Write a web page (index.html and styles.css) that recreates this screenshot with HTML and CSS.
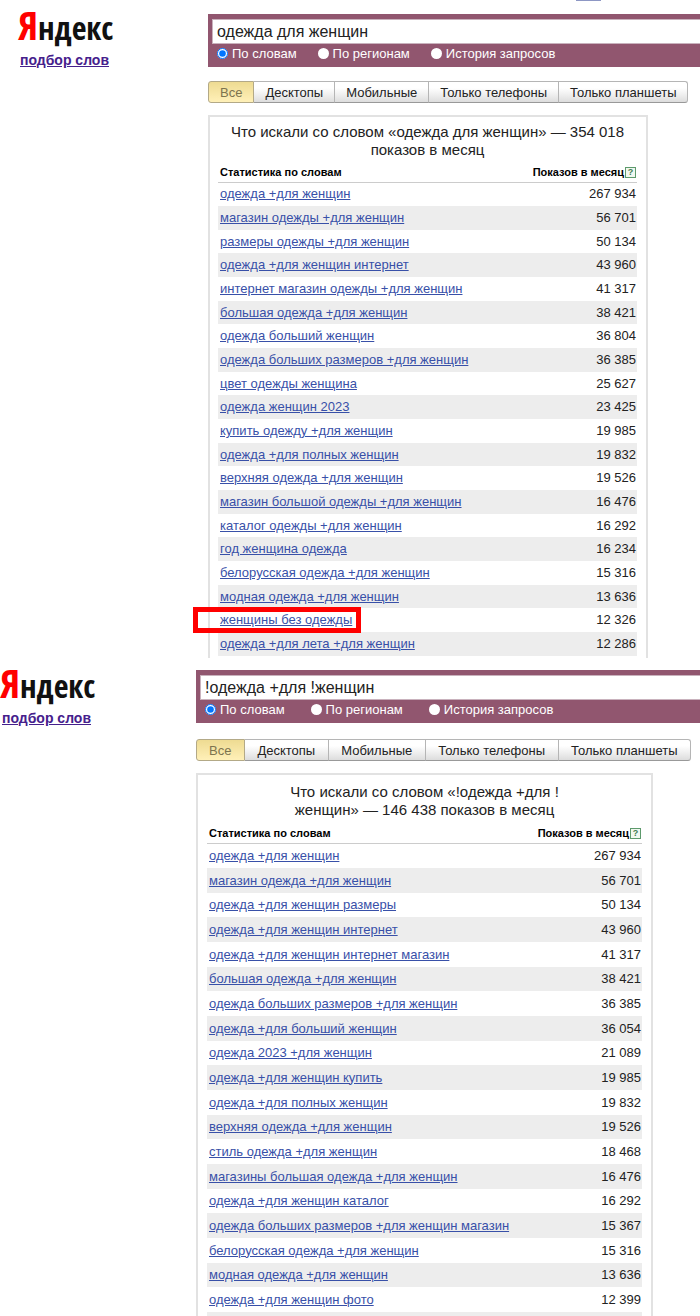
FILE: index.html
```html
<!DOCTYPE html>
<html lang="ru">
<head>
<meta charset="utf-8">
<meta name="viewport" content="width=device-width, initial-scale=1">
<title>Яндекс — подбор слов</title>
<link rel="stylesheet" href="styles.css">
</head>
<body>
<section class="sheet sheet-first">
  <span class="top-rule"></span>
  <header class="brand">
    <div class="logo"><span class="logo-ya">Я</span>ндекс</div>
    <a class="service" href="#">подбор слов</a>
  </header>
  <main class="content">
    <form class="search">
      <input class="query" type="text" aria-label="Запрос" value="одежда для женщин">
      <div class="modes">
        <label class="mode"><input type="radio" name="mode1" checked>По словам</label>
        <label class="mode"><input type="radio" name="mode1">По регионам</label>
        <label class="mode"><input type="radio" name="mode1">История запросов</label>
      </div>
    </form>
    <nav class="tabs">
      <button class="tab active" type="button">Все</button>
      <button class="tab" type="button">Десктопы</button>
      <button class="tab" type="button">Мобильные</button>
      <button class="tab" type="button">Только телефоны</button>
      <button class="tab" type="button">Только планшеты</button>
    </nav>
    <section class="panel">
      <h2 class="title">Что искали со словом «одежда для женщин» — 354 018 показов в месяц</h2>
      <table class="stats">
        <thead><tr><th>Статистика по словам</th><th class="num">Показов в месяц<button class="help" type="button">?</button></th></tr></thead>
        <tbody>
          <tr><td><a href="#">одежда +для женщин</a></td><td class="num">267 934</td></tr>
          <tr><td><a href="#">магазин одежды +для женщин</a></td><td class="num">56 701</td></tr>
          <tr><td><a href="#">размеры одежды +для женщин</a></td><td class="num">50 134</td></tr>
          <tr><td><a href="#">одежда +для женщин интернет</a></td><td class="num">43 960</td></tr>
          <tr><td><a href="#">интернет магазин одежды +для женщин</a></td><td class="num">41 317</td></tr>
          <tr><td><a href="#">большая одежда +для женщин</a></td><td class="num">38 421</td></tr>
          <tr><td><a href="#">одежда больший женщин</a></td><td class="num">36 804</td></tr>
          <tr><td><a href="#">одежда больших размеров +для женщин</a></td><td class="num">36 385</td></tr>
          <tr><td><a href="#">цвет одежды женщина</a></td><td class="num">25 627</td></tr>
          <tr><td><a href="#">одежда женщин 2023</a></td><td class="num">23 425</td></tr>
          <tr><td><a href="#">купить одежду +для женщин</a></td><td class="num">19 985</td></tr>
          <tr><td><a href="#">одежда +для полных женщин</a></td><td class="num">19 832</td></tr>
          <tr><td><a href="#">верхняя одежда +для женщин</a></td><td class="num">19 526</td></tr>
          <tr><td><a href="#">магазин большой одежды +для женщин</a></td><td class="num">16 476</td></tr>
          <tr><td><a href="#">каталог одежды +для женщин</a></td><td class="num">16 292</td></tr>
          <tr><td><a href="#">год женщина одежда</a></td><td class="num">16 234</td></tr>
          <tr><td><a href="#">белорусская одежда +для женщин</a></td><td class="num">15 316</td></tr>
          <tr><td><a href="#">модная одежда +для женщин</a></td><td class="num">13 636</td></tr>
          <tr><td><span class="marked"><a href="#">женщины без одежды</a></span></td><td class="num">12 326</td></tr>
          <tr><td><a href="#">одежда +для лета +для женщин</a></td><td class="num">12 286</td></tr>
        </tbody>
      </table>
    </section>
  </main>
</section>
<section class="sheet sheet-second">
  <header class="brand">
    <div class="logo"><span class="logo-ya">Я</span>ндекс</div>
    <a class="service" href="#">подбор слов</a>
  </header>
  <main class="content">
    <form class="search">
      <input class="query" type="text" aria-label="Запрос" value="!одежда +для !женщин">
      <div class="modes">
        <label class="mode"><input type="radio" name="mode2" checked>По словам</label>
        <label class="mode"><input type="radio" name="mode2">По регионам</label>
        <label class="mode"><input type="radio" name="mode2">История запросов</label>
      </div>
    </form>
    <nav class="tabs">
      <button class="tab active" type="button">Все</button>
      <button class="tab" type="button">Десктопы</button>
      <button class="tab" type="button">Мобильные</button>
      <button class="tab" type="button">Только телефоны</button>
      <button class="tab" type="button">Только планшеты</button>
    </nav>
    <section class="panel">
      <h2 class="title">Что искали со словом «!одежда +для !<br>женщин» — 146 438 показов в месяц</h2>
      <table class="stats">
        <thead><tr><th>Статистика по словам</th><th class="num">Показов в месяц<button class="help" type="button">?</button></th></tr></thead>
        <tbody>
          <tr><td><a href="#">одежда +для женщин</a></td><td class="num">267 934</td></tr>
          <tr><td><a href="#">магазин одежда +для женщин</a></td><td class="num">56 701</td></tr>
          <tr><td><a href="#">одежда +для женщин размеры</a></td><td class="num">50 134</td></tr>
          <tr><td><a href="#">одежда +для женщин интернет</a></td><td class="num">43 960</td></tr>
          <tr><td><a href="#">одежда +для женщин интернет магазин</a></td><td class="num">41 317</td></tr>
          <tr><td><a href="#">большая одежда +для женщин</a></td><td class="num">38 421</td></tr>
          <tr><td><a href="#">одежда больших размеров +для женщин</a></td><td class="num">36 385</td></tr>
          <tr><td><a href="#">одежда +для больший женщин</a></td><td class="num">36 054</td></tr>
          <tr><td><a href="#">одежда 2023 +для женщин</a></td><td class="num">21 089</td></tr>
          <tr><td><a href="#">одежда +для женщин купить</a></td><td class="num">19 985</td></tr>
          <tr><td><a href="#">одежда +для полных женщин</a></td><td class="num">19 832</td></tr>
          <tr><td><a href="#">верхняя одежда +для женщин</a></td><td class="num">19 526</td></tr>
          <tr><td><a href="#">стиль одежда +для женщин</a></td><td class="num">18 468</td></tr>
          <tr><td><a href="#">магазины большая одежда +для женщин</a></td><td class="num">16 476</td></tr>
          <tr><td><a href="#">одежда +для женщин каталог</a></td><td class="num">16 292</td></tr>
          <tr><td><a href="#">одежда больших размеров +для женщин магазин</a></td><td class="num">15 367</td></tr>
          <tr><td><a href="#">белорусская одежда +для женщин</a></td><td class="num">15 316</td></tr>
          <tr><td><a href="#">модная одежда +для женщин</a></td><td class="num">13 636</td></tr>
          <tr><td><a href="#">одежда +для женщин фото</a></td><td class="num">12 399</td></tr>
          <tr class="cut"><td></td><td></td></tr>
        </tbody>
      </table>
    </section>
  </main>
</section>
</body>
</html>
```
FILE: styles.css
```css
* { box-sizing: border-box; }

body {
  margin: 0;
  background: #fff;
  color: #222;
  font-family: "Liberation Sans", Arial, sans-serif;
  font-size: 13px;
}

.sheet {
  display: grid;
  position: relative;
}
.sheet-first {
  --row: 24px;
  --gutter: 52px;
  --mode-gap: 21px;
  --bar-top: 14px;
  --tab-padding: 11px;
  --head: 19px;
  --title-top: 6px;
  grid-template-columns: 208px 1fr;
}
.sheet-second {
  --row: 25px;
  --gutter: 47px;
  --mode-gap: 26px;
  --bar-top: 12px;
  --tab-padding: 13px;
  --head: 20px;
  --title-top: 8px;
  grid-template-columns: 196px 1fr;
}

.top-rule {
  position: absolute;
  top: 0;
  left: 576px;
  width: 25px;
  height: 1px;
  background: #8d97c4;
}

.brand { padding-left: 18px; }
.sheet-second .brand { padding-left: 0; }
.logo {
  height: 52px;
  font-family: "Liberation Sans Narrow", "Open Sans Condensed", "DejaVu Sans Condensed", sans-serif;
  font-size: 32px;
  font-weight: 300;
  line-height: 50px;
  color: #111;
  white-space: nowrap;
}
.logo-ya { color: #f00; font-size: 40px; }
.service {
  display: inline-block;
  margin-left: 2px;
  font-size: 14px;
  line-height: 16px;
  font-weight: bold;
  color: #45208c;
}

.content { padding-top: var(--bar-top); }
.search { padding: 5px 0 0 4px; background: #91566f; }
.query {
  display: block;
  width: 100%;
  height: 25px;
  padding: 0 4px;
  border: 1px solid #c9b2bd;
  border-right: 0;
  border-radius: 0;
  background: #fff;
  color: #222;
  font: 16px "Liberation Sans", Arial, sans-serif;
}
.modes { display: flex; gap: var(--mode-gap); height: 23px; padding: 0 0 4px 5px; }
.mode { display: flex; align-items: center; gap: 4px; color: #fff; white-space: nowrap; }
.mode input { width: 11px; height: 11px; margin: 0; }
.mode input:not(:checked) {
  appearance: none;
  border-radius: 50%;
  background: #fff;
}

.tabs { display: flex; margin-top: 14px; }
.sheet-second .tabs { margin-top: 16px; }
.tab {
  height: 22px;
  padding: 0 var(--tab-padding) 0 12px;
  border: 1px solid #b5b5b5;
  border-left-width: 0;
  border-bottom-color: #999;
  background: linear-gradient(#fff 30%, #ddd);
  color: #222;
  font: 13px "Liberation Sans", Arial, sans-serif;
  white-space: nowrap;
}
.sheet-first .tab { padding-left: 11px; }
.tab:last-child { border-radius: 0 3px 3px 0; }
.tab.active {
  border-left-width: 1px;
  border-radius: 3px 0 0 3px;
  border-color: #b3a987;
  background: linear-gradient(#eedb92, #fff0b8);
  color: #7d744f;
}

.panel {
  margin: 12px var(--gutter) 0 0;
  padding: var(--title-top) 9px 2px 8px;
  border: 2px solid #e2e2e2;
  border-bottom: 0;
}
.sheet-second .panel { padding-bottom: 0; padding-left: 9px; }
.title { margin: 0; font-size: 15px; line-height: 18px; font-weight: normal; text-align: center; }

.stats { width: 100%; margin-top: 4px; border-collapse: collapse; }
.stats th {
  height: var(--head);
  padding: 0 2px;
  border-bottom: 1px solid #ccc;
  color: #000;
  font-size: 11px;
  text-align: left;
}
.stats td { height: var(--row); padding: 0 2px; line-height: 16px; }
.stats tr:nth-child(3n) td { height: calc(var(--row) - 1px); }
.stats tbody tr:nth-child(even) { background: #ededed; }
.stats .num { padding-right: 1px; text-align: right; }
.stats a { color: #3850a8; }
.stats .cut td { height: 4px; }

.help {
  width: 11px;
  height: 11px;
  margin-left: 1px;
  padding: 0;
  border: 1px solid #5d9a6c;
  background: #f1f8f0;
  color: #3f7d50;
  font: bold 9px/9px "Liberation Sans", Arial, sans-serif;
  vertical-align: 1px;
}

.marked { position: relative; }
.marked::after {
  content: "";
  position: absolute;
  inset: -5px -9px -6px -27px;
  border: 5px solid #f00;
  pointer-events: none;
}
```
